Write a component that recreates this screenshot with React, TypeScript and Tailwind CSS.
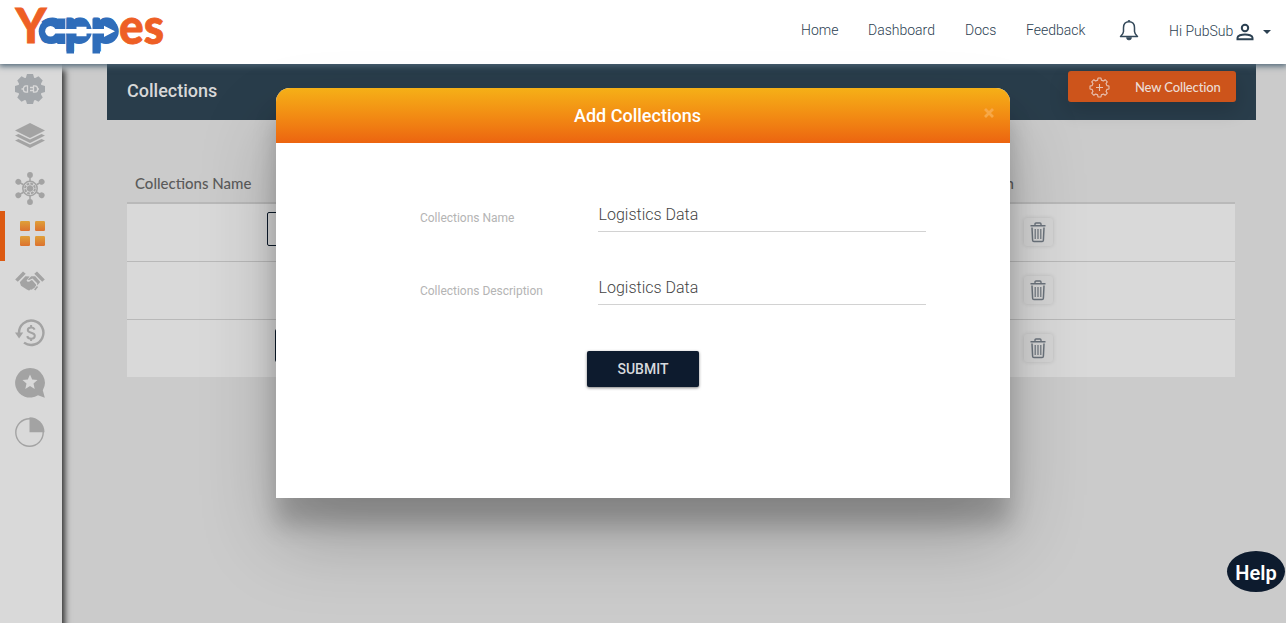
import React from 'react';

const teeth = [0, 45, 90, 135, 180, 225, 270, 315];

function Logo() {
  return (
    <svg width="160" height="64" viewBox="0 0 160 64" className="block overflow-visible" fontFamily="Lato, sans-serif" fontWeight="900">
      <text fill="#ee5f25" stroke="#ee5f25" strokeWidth=".8" x="15.500" y="43.300" fontSize="47" textLength="31" lengthAdjust="spacingAndGlyphs">Y</text>
      <text fill="#2f6dba" stroke="#2f6dba" strokeWidth="1" x="40" y="43.300" fontSize="47" textLength="78" lengthAdjust="spacingAndGlyphs">app</text>
      <text fill="#ee5f25" stroke="#ee5f25" strokeWidth=".8" x="119" y="43.800" fontSize="49" textLength="45" lengthAdjust="spacingAndGlyphs">es</text>
      <g fill="#2f6dba">
        <circle cx="51.500" cy="31.200" r="12.800" />
        <path d="M57.500 18.500H65V44h-7.500zM66.500 18.500H74V53.500h-7.500zM92.500 18.500H100V53.500h-7.500z" />
        <circle cx="79" cy="31.200" r="12.800" />
        <circle cx="106" cy="31.200" r="12.800" />
      </g>
      <circle cx="50.500" cy="31.300" r="5.300" fill="#fff" />
      <path d="M51 29h25.500v-2.300h10V29H104v-3.300l11 5.600-11 5.600v-3.400H86.500v2.700h-10v-2.700H51z" fill="#fff" />
      <path d="M65.700 18v11M65.700 33.500V44" stroke="#8eb2df" strokeWidth=".8" />
    </svg>
  );
}

function GearPlug() {
  return (
    <svg width="30" height="30" viewBox="0 0 30 30" fill="#a3a7ab">
      <circle cx="15" cy="15" r="12" />
      {teeth.map((a) => <path key={a} d="M10.500 5l1.500-5h6l1.500 5z" transform={`rotate(${a} 15 15)`} />)}
      <path d="M6.500 15H9M12.500 11.800H11c-3.500 0-3.500 6.400 0 6.400h1.500zM18.500 11.800H20c3.500 0 3.500 6.400 0 6.400h-1.500zM15 13.500h3.500m-3.500 3h3.500M22.500 15H24" fill="none" stroke="#d9d9d9" strokeWidth="1.300" />
    </svg>
  );
}

function Layers() {
  return (
    <svg width="30" height="26" viewBox="0 0 30 26" fill="#a3a3a3">
      <path d="M15 0l15 7.500L15 15 0 7.500z" />
      <path d="M0 12.500l3.500-1.600L15 16.500l11.500-5.600 3.500 1.600L15 20z" />
      <path d="M0 17.500l3.500-1.600L15 21.500l11.500-5.600 3.500 1.600L15 25z" />
    </svg>
  );
}

function Hub() {
  return (
    <svg width="30" height="33" viewBox="0 0 30 33" fill="none" stroke="#a3a3a3">
      {[0, 60, 120, 180, 240, 300].map((a) => (
        <g key={a} transform={`rotate(${a} 15 16.500)`}>
          <path d="M15 9V3" strokeWidth="1.500" />
          <circle cx="15" cy="3" r="2.900" fill="#a3a3a3" stroke="none" />
        </g>
      ))}
      <circle cx="15" cy="16.500" r="7.200" strokeWidth="1.500" />
      <circle cx="15" cy="16.500" r="4.900" strokeWidth="2" strokeDasharray="2.800 1" />
      <circle cx="15" cy="16.500" r="2.800" fill="#a3a3a3" />
    </svg>
  );
}

function GridIcon() {
  return (
    <svg width="26" height="26" viewBox="0 0 26 26">
      <defs>
        <linearGradient id="tile" x1="0" y1="0" x2="0" y2="1">
          <stop offset="0" stopColor="#dfa039" />
          <stop offset="1" stopColor="#dc722f" />
        </linearGradient>
      </defs>
      {[[0, 0], [15, 0], [0, 15], [15, 15]].map(([x, y]) => (
        <rect key={`${x}-${y}`} x={x} y={y} width="10" height="10" rx="1.200" fill="url(#tile)" />
      ))}
    </svg>
  );
}

function Handshake() {
  return (
    <svg width="30" height="21" viewBox="0 0 30 21" fill="#a3a3a3">
      <path d="M8 .5l2.700 2.300L2.800 10.800.2 8.500zM22 .5l-2.700 2.300 7.900 8 2.600-2.300z" />
      <path d="M4.800 11.300l5.600-6 4.200.2-3 4c.6 1.700 2.700 1.800 4.200.1l1.200-.7 4 4.600c.6 2-1 2-1 2.300-.2 1.700-1.700 1.600-2 1.800-1 1.500-2 1-2.600 1-1 1.500-2.400.8-3.600 0L6 14.800z" />
      <path d="M12.600 8.800l3.600-3.500h4l5 5.700-3 3.600v-2.300L17.500 7.600l-3.300 1.500z" />
      <path d="M22.500 15.600l-2.800 3.400" stroke="#a3a3a3" strokeWidth="1.600" />
    </svg>
  );
}

function Refund() {
  return (
    <svg width="30" height="28" viewBox="0 0 30 28" fill="none" stroke="#a3a3a3">
      <path d="M4 14A12.200 12.200 0 1 1 9 23.600" strokeWidth="2.400" />
      <path d="M0 13.500h8.200L4.100 19.500z" fill="#a3a3a3" stroke="none" />
      <path d="M19.600 10.600c-.5-1.600-1.800-2.200-3.500-2.200-2 0-3.300 1-3.300 2.600 0 3.800 7 1.800 7 5.800 0 1.800-1.500 2.900-3.700 2.900-2 0-3.400-.9-3.900-2.600M16.100 6v2.400m0 11.200V22" strokeWidth="2" />
    </svg>
  );
}

function StarBubble() {
  return (
    <svg width="30" height="30" viewBox="0 0 30 30">
      <path d="M15 0a14.800 14.800 0 0 1 12.800 22.300l2 7.400-6.800-2.500A14.800 14.800 0 1 1 15 0z" fill="#a3a3a3" />
      <path d="M15 6.600l2.200 5 5.300.5-4 3.500 1.200 5.300-4.700-2.800-4.700 2.800 1.200-5.300-4-3.500 5.300-.5z" fill="#d9d9d9" />
    </svg>
  );
}

function Pie() {
  return (
    <svg width="30" height="30" viewBox="0 0 30 30">
      <circle cx="14.500" cy="15.500" r="13.700" fill="none" stroke="#a3a3a3" strokeWidth="1.400" />
      <path d="M14.500.2A15 15 0 0 1 29.500 15.200h-15z" fill="#a3a3a3" />
    </svg>
  );
}

function Bell() {
  return (
    <svg width="20" height="21" viewBox="0 0 20 21" fill="none" stroke="#34495a" strokeWidth="1.500">
      <path d="M10 1.800c-3.500 0-5.500 2.400-5.500 6v3.700c0 2-1.500 3.500-3 5h17c-1.500-1.500-3-3-3-5V7.800c0-3.600-2-6-5.500-6z" strokeLinejoin="round" />
      <path d="M8.800 1.500a1.200 1.200 0 0 1 2.400 0M7.500 17.500a2.500 2.500 0 0 0 5 0z" fill="#34495a" strokeWidth=".6" />
    </svg>
  );
}

function Trash() {
  return (
    <svg width="16" height="21" viewBox="0 0 16 21" fill="none" stroke="#6b737c">
      <path d="M.5 3.800h15M5 3.500V2q0-1 1-1h4q1 0 1 1v1.500" strokeWidth="1.400" />
      <path d="M2 5.500l.6 12.800q.1 1.200 1.300 1.200h8.200q1.200 0 1.300-1.200L14 5.500" strokeWidth="1.500" />
      <path d="M5.200 7v10M8 7v10M10.800 7v10" strokeWidth="1.200" />
    </svg>
  );
}

function GearPlus() {
  const profile: [number, number][] = [[-14, 7.6], [-9, 9.6], [9, 9.6], [14, 7.6]];
  const points = teeth.flatMap((base) =>
    profile.map(([d, r]) => {
      const a = ((base + d) * Math.PI) / 180;
      return `${(10.5 + r * Math.sin(a)).toFixed(2)},${(10.5 - r * Math.cos(a)).toFixed(2)}`;
    }),
  );
  return (
    <svg width="21" height="21" viewBox="0 0 21 21" fill="none" stroke="#e9c3b3" strokeWidth="1.100">
      <polygon points={points.join(' ')} strokeLinejoin="round" />
      <path d="M10.500 7v7M7 10.500h7" />
    </svg>
  );
}

function Field({ label, value }: { label: string; value: string }) {
  return (
    <div className="flex h-[73px]">
      <label className="w-[178px] pt-[13px] text-[12px] leading-4 tracking-[-0.02px] text-[#b4b4b4]">{label}</label>
      <div className="h-[35px] w-[328px] border-b border-[#d2d2d2] pt-[6px] pl-[0.500px] text-[16px] font-light leading-6 text-[#444]">{value}</div>
    </div>
  );
}

function Row({ box }: { box: string }) {
  return (
    <div className="flex h-[58px] items-center justify-between border-b border-[#b9b9b9] bg-[#d9d9d9] pr-[182px] last:h-[57px] last:border-b-0">
      <div className={box} />
      <div className="-mt-px flex h-[28px] w-[29px] items-center justify-center rounded-[3px] bg-[#d5d5d5] pr-px shadow-[0_0_4px_rgba(0,0,0,0.13)]">
        <Trash />
      </div>
    </div>
  );
}

export default function App() {
  return (
    <div className="relative flex h-[623px] w-[1286px] flex-col overflow-hidden bg-[#cbcbcb] font-['Roboto',sans-serif]">
      <header className="relative z-10 flex h-16 shrink-0 bg-white shadow-[0_1px_6px_1px_#4b6374]">
        <div className="w-[801px]"><Logo /></div>
        <nav className="flex pt-[20px] text-[14px] font-light leading-5 text-[#2c4152]">
          <a className="w-[67px]">Home</a>
          <a className="w-[97px]">Dashboard</a>
          <a className="w-[61px]">Docs</a>
          <a className="w-[93px]">Feedback</a>
          <span className="w-[50px]"><Bell /></span>
          <span className="flex w-[67px] whitespace-nowrap pt-px">Hi PubSub</span>
          <svg width="18" height="18" viewBox="0 0 18 18" className="mt-[3px]" fill="none" stroke="#2c4152" strokeWidth="2">
            <circle cx="9" cy="5" r="3.200" />
            <path d="M1.500 16.200v-1.500c0-2 4-3.300 7.500-3.300s7.500 1.300 7.500 3.300v1.500z" />
          </svg>
          <span className="ml-[9px] mt-[10px] h-0 w-0 border-x-4 border-t-4 border-x-transparent border-t-[#2c4152]" />
        </nav>
      </header>
      <div className="flex min-h-0 flex-1">
        <aside className="relative flex h-[600px] w-[62px] shrink-0 flex-col items-center bg-[#d9d9d9] pr-[2px] pt-[10px] shadow-[3px_6px_6px_rgba(0,0,0,0.75)]">
          <div className="h-[49px]"><GearPlug /></div>
          <div className="h-[49px]"><Layers /></div>
          <div className="h-[39px]"><Hub /></div>
          <div className="-mr-[2px] flex h-[50px] w-[62px] border-l-[5px] border-[#dc5a12] pl-[15px] pt-[10px]"><GridIcon /></div>
          <div className="h-[48px] pt-[10px]"><Handshake /></div>
          <div className="h-[49px] pt-[10px]"><Refund /></div>
          <div className="h-[49px] pt-[10px]"><StarBubble /></div>
          <div className="pt-[10px]"><Pie /></div>
        </aside>
        <main className="ml-[45px] w-[1149px]">
          <div className="flex h-[56px] justify-between bg-[#293d4b] pl-[20px] pr-[20px]">
            <h1 className="pt-[15px] text-[18px] font-medium leading-6 text-[#d8d8d8]">Collections</h1>
            <button className="mt-[7px] flex h-[31px] w-[168px] items-center rounded-[3px] bg-[#cd541b] pl-[21px] pt-[2px] shadow-[0_8px_20px_rgba(0,0,0,0.16)]">
              <GearPlus />
              <span className="ml-[25px] whitespace-nowrap font-['Lato',sans-serif] text-[13px] font-medium tracking-[-0.140px] text-[#ecdcd5]">New Collection</span>
            </button>
          </div>
          <section className="ml-[20px] mr-[21px] pt-[51px]">
            <div className="flex h-[33px] justify-between border-b-2 border-[#b9b9b9] pl-[8px] pr-[221px] font-['Lato',sans-serif] text-[15px] font-medium leading-6 text-[#5b5b5b]">
              <span>Collections Name</span><span>Action</span>
            </div>
            <Row box="ml-[140px] mb-[7px] h-[34px] w-[90px] rounded-[2px] border border-[#0d1b2b]" />
            <Row box="ml-[160px]" />
            <Row box="ml-[148px] mb-[7px] h-[33px] w-[90px] rounded-[2px] bg-[#0d1b2b]" />
          </section>
        </main>
      </div>
      <div role="dialog" className="absolute left-[276px] top-[88px] z-20 h-[410px] w-[734px] rounded-t-[14px] bg-white shadow-[0_27px_24px_0_rgba(0,0,0,0.2),0_40px_77px_0_rgba(0,0,0,0.22)]">
        <div className="flex h-[55px] items-center rounded-t-[14px] bg-linear-to-b from-[#f5b017] to-[#ec6410] pl-[31px] pr-[15px]">
          <h2 className="flex-1 pr-[15px] text-center text-[18px] font-medium text-white">Add Collections</h2>
          <svg width="12" height="12" viewBox="0 0 12 12" className="-mt-[6px]" stroke="#f7a847" strokeWidth="2.800"><path d="M2 2l8 8m0-8l-8 8" /></svg>
        </div>
        <div className="pl-[144px] pt-[54px]">
          <Field label="Collections Name" value="Logistics Data" />
          <Field label="Collections Description" value="Logistics Data" />
          <button className="ml-[167px] mt-[8px] h-[36px] w-[112px] rounded-[2px] bg-[#0d1b2e] text-[14px] font-medium text-[#d7dade] shadow-[0_1px_3px_rgba(0,0,0,0.5)]">SUBMIT</button>
        </div>
      </div>
      <button className="absolute left-[1227px] top-[551px] z-30 flex h-[41px] w-[58px] items-center justify-center rounded-[50%] bg-[#0d1b2e] pt-[2px] text-[20px] font-semibold text-white">Help</button>
    </div>
  );
}
